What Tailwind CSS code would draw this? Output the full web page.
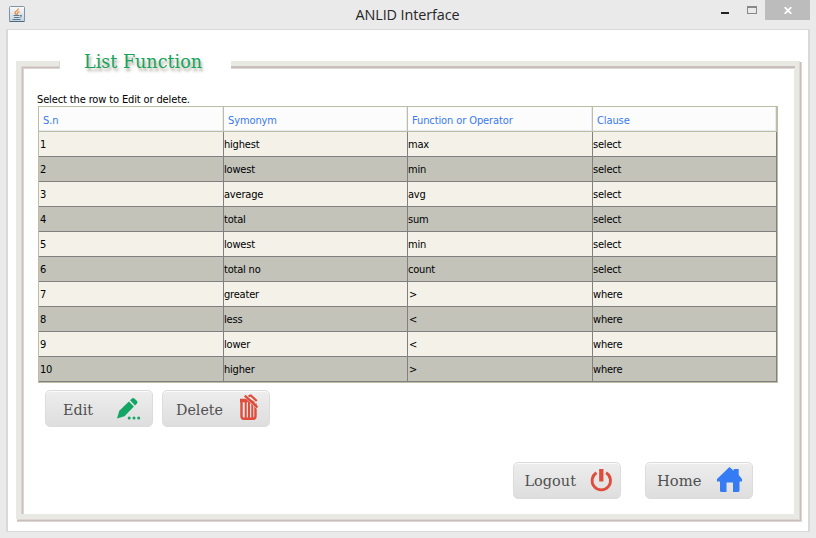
<!DOCTYPE html>
<html lang="en">
<head>
<meta charset="utf-8">
<title>ANLID Interface</title>
<script src="https://cdn.jsdelivr.net/npm/@tailwindcss/browser@4"></script>
</head>
<body class="w-[816px] h-[538px] overflow-hidden bg-[#eaeaea] flex flex-col font-['DejaVu_Sans_Condensed','DejaVu_Sans',sans-serif]">
<header class="h-[29px] shrink-0 flex items-start pl-[9px] pr-[6px]">
  <svg class="mt-[6px] w-4 h-4 shrink-0" viewBox="0 0 16 16" fill="none"><defs><linearGradient id="j" x2="0" y2="1"><stop stop-color="#fafafa"/><stop offset="1" stop-color="#c5d3dd"/></linearGradient></defs><rect x=".5" y=".5" width="15" height="15" rx="1" fill="url(#j)" stroke="#7e94a5"/><path d="M.5 15.5h15" stroke="#4b6980"/><path d="M9.5 2.5C9.5 5 5.5 5 6 7l1.5 2M10.5 5.5C8.500 6.500 7.500 7.500 9 8.500" stroke="#e98a3c" stroke-width="1.300"/><path d="M4.500 9.500h6M5 11.500h5M3.500 13.500h8M11 9.500c2.500-1 2 1.500-.5 2" stroke="#557a95"/></svg>
  <h1 class="w-[691px] pl-[74px] text-center text-[14.4px] leading-[30px] tracking-[-0.1px] text-[#262626] font-['Open_Sans',sans-serif]">ANLID Interface</h1>
  <div class="flex flex-1 justify-end">
    <svg class="w-[44px] h-5 shrink-0" viewBox="721 0 44 20" shape-rendering="crispEdges"><path fill="#222" d="M721 12h8v2h-8z"/><path fill="#888" fill-rule="evenodd" d="M747 6h10v8h-10zM748 8v5h8V8z"/></svg>
    <div class="w-[45px] h-5 shrink-0 bg-[#bcbcbc] flex items-center justify-center"><svg class="w-2 h-[7px] mt-[1px]" viewBox="0 0 8 7"><path d="M.7.2 7.300 6.800M7.300.2.7 6.800" stroke="#fff" stroke-width="1.900"/></svg></div>
  </div>
</header>
<main class="relative ml-[6px] w-[804px] h-[503px] bg-white border-2 border-[#d9d9d9] border-t-[1px] border-b-[1px]">
  <svg class="absolute left-[8px] top-[31px] w-[786px] h-[461px]" viewBox="16 61 786 461" shape-rendering="crispEdges">
    <path fill="#e9e9e4" d="M16 61h43v5H21v448h-5zM231 61h569v5H231zM794 66h5v453h-5zM16 514h783v5H16z"/>
    <path fill="#c8bebc" d="M22 67h37v1H23v446h-1zM231 66h564v2H231zM800 62h1v459H17v-1h783z"/>
    <path fill="#ded6d3" d="M21 66h38v1H22v447h-1zM23 68h36v1H24v445h-1zM231 68h563v1H231zM799 62h1v458H17v-1h782zM801 62h1v460H17v-1h784zM59 61h1v8h-1z"/>
  </svg>
  <section class="relative pl-[29px] pt-[19px] flex flex-col">
    <h2 class="ml-[47px] h-[26px] w-[140px] whitespace-nowrap text-[#17a35b] font-['DejaVu_Serif',serif] [text-shadow:2px_3px_3px_#aaa89a]"><svg class="w-[140px] h-[34px] overflow-visible" viewBox="0 0 140 34"><text x="0" y="19" textLength="118" lengthAdjust="spacingAndGlyphs" font-size="18.500" fill="#17a35b">List Function</text></svg></h2>
    <p class="mt-[16px] h-[15px] text-[11px] leading-[18px] tracking-[-0.13px] text-black whitespace-nowrap">Select the row to Edit or delete.</p>
    <table class="ml-[1px] w-[740px] table-fixed border-separate border-spacing-0 border border-[#bdbda5] text-[11px] leading-[22px] tracking-[-0.2px] text-black text-left">
      <colgroup><col class="w-[185px]"><col class="w-[184px]"><col class="w-[185px]"><col class="w-[184px]"></colgroup>
      <thead><tr class="h-[25px] bg-[#fcfcfc] text-[#377af0] [&>th]:font-normal [&>th]:p-0 [&>th]:pl-1 [&>th]:pt-[3px] [&>th]:leading-[21px] [&>th]:tracking-[-0.1px] [&>th]:border-r [&>th]:border-b [&>th]:border-[#bdbda5] [&>th]:shadow-[inset_-1px_-1px_#e4ebf3]"><th>S.n</th><th>Symonym</th><th>Function or Operator</th><th>Clause</th></tr></thead>
      <tbody class="[&>tr]:h-[25px] [&>tr]:bg-[#f3f1e8] [&>tr:nth-child(even)]:bg-[#c3c3ba] [&_td]:p-0 [&_td]:pt-[2px] [&_td]:border-r [&_td]:border-b [&_td]:border-[#808080] [&_td:first-child]:pl-[1px]">
        <tr><td>1</td><td>highest</td><td>max</td><td>select</td></tr>
        <tr><td>2</td><td>lowest</td><td>min</td><td>select</td></tr>
        <tr><td>3</td><td>average</td><td>avg</td><td>select</td></tr>
        <tr><td>4</td><td>total</td><td>sum</td><td>select</td></tr>
        <tr><td>5</td><td>lowest</td><td>min</td><td>select</td></tr>
        <tr><td>6</td><td>total no</td><td>count</td><td>select</td></tr>
        <tr><td>7</td><td>greater</td><td class="pl-[1px]!">&gt;</td><td>where</td></tr>
        <tr><td>8</td><td>less</td><td class="pl-[1px]!">&lt;</td><td>where</td></tr>
        <tr><td>9</td><td>lower</td><td class="pl-[1px]!">&lt;</td><td>where</td></tr>
        <tr><td>10</td><td>higher</td><td class="pl-[1px]!">&gt;</td><td>where</td></tr>
      </tbody>
    </table>
    <div class="ml-[8px] mt-[7px] flex gap-[9px] text-[#484848] font-['DejaVu_Serif',serif]">
      <button class="w-[108px] h-[37px] rounded-[5px] border border-[#dcdcdc] bg-linear-to-b from-[#ededed] to-[#dedede] shadow-[inset_0_1px_#fafafa]"><svg class="-ml-px -mt-px w-[108px] h-[37px]" viewBox="45 390 108 37"><text x="63" y="415" textLength="30" lengthAdjust="spacingAndGlyphs" font-size="15.500" fill="#505050">Edit</text><g fill="#12a563"><path d="m117 418.500 2.300-7.800 9.600-9.200 5 5-9.400 9.700zM130 400.300l2-1.900q1.200-1 2.400.1l2.600 2.600q1 1.200 0 2.300l-2 2z"/><circle cx="129.200" cy="418" r="1.500"/><circle cx="134" cy="418" r="1.500"/><circle cx="138.700" cy="418" r="1.500"/></g></svg></button>
      <button class="w-[108px] h-[37px] rounded-[5px] border border-[#dcdcdc] bg-linear-to-b from-[#ededed] to-[#dedede] shadow-[inset_0_1px_#fafafa]"><svg class="-ml-px -mt-px w-[108px] h-[37px]" viewBox="162 390 108 37"><text x="176" y="415" textLength="47" lengthAdjust="spacingAndGlyphs" font-size="15.500" fill="#505050">Delete</text><g fill="none" stroke="#df4c3b"><path d="M241.500 400V416q0 2.800 2.500 2.800h9q2.500 0 2.500-2.800V403.500" stroke-width="2.400"/><path d="M240 400.500h9l5 3" stroke-width="3.400"/><path d="M245.700 402v16M249 402v16M252.300 403v15" stroke-width="2"/><path d="m244.800 397.300 12.500 11.500" stroke="#e8e8e8" stroke-width="1"/><path d="m244.800 395.700 12.700 11.800" stroke-width="2.300"/><path d="m248.500 396.200 2.300-.7 6 5.500" stroke-width="2.200"/></g></svg></button>
    </div>
    <div class="ml-[476px] mt-[35px] flex gap-[24px]">
      <button class="w-[108px] h-[37px] rounded-[5px] border border-[#dcdcdc] bg-linear-to-b from-[#ededed] to-[#dedede] shadow-[inset_0_1px_#fafafa] font-['DejaVu_Serif',serif]"><svg class="-ml-px -mt-px w-[108px] h-[37px]" viewBox="513 462 108 37"><text x="524.500" y="486" textLength="51.500" lengthAdjust="spacingAndGlyphs" font-size="15.500" fill="#505050">Logout</text><g fill="none" stroke="#df4c3b"><path d="M596.500 472.800a9.200 9.200 0 1 0 9.600 0" stroke-width="2.800"/><path d="M601.300 469v12.500" stroke-width="4.300"/></g></svg></button>
      <button class="w-[108px] h-[37px] rounded-[5px] border border-[#dcdcdc] bg-linear-to-b from-[#ededed] to-[#dedede] shadow-[inset_0_1px_#fafafa] font-['DejaVu_Serif',serif]"><svg class="-ml-px -mt-px w-[108px] h-[37px]" viewBox="645 462 108 37"><text x="657" y="486" textLength="44.500" lengthAdjust="spacingAndGlyphs" font-size="15.500" fill="#505050">Home</text><path fill="#347bf4" d="m729.500 467 4.200 3.700V469h5v6l3.300 4v2.500h-2.500v9q0 1.500-1.500 1.500h-5v-9.500h-6.500v9.500h-5q-1.500 0-1.500-1.500v-9H717V479z"/></svg></button>
    </div>
  </section>
</main>
</body>
</html>
